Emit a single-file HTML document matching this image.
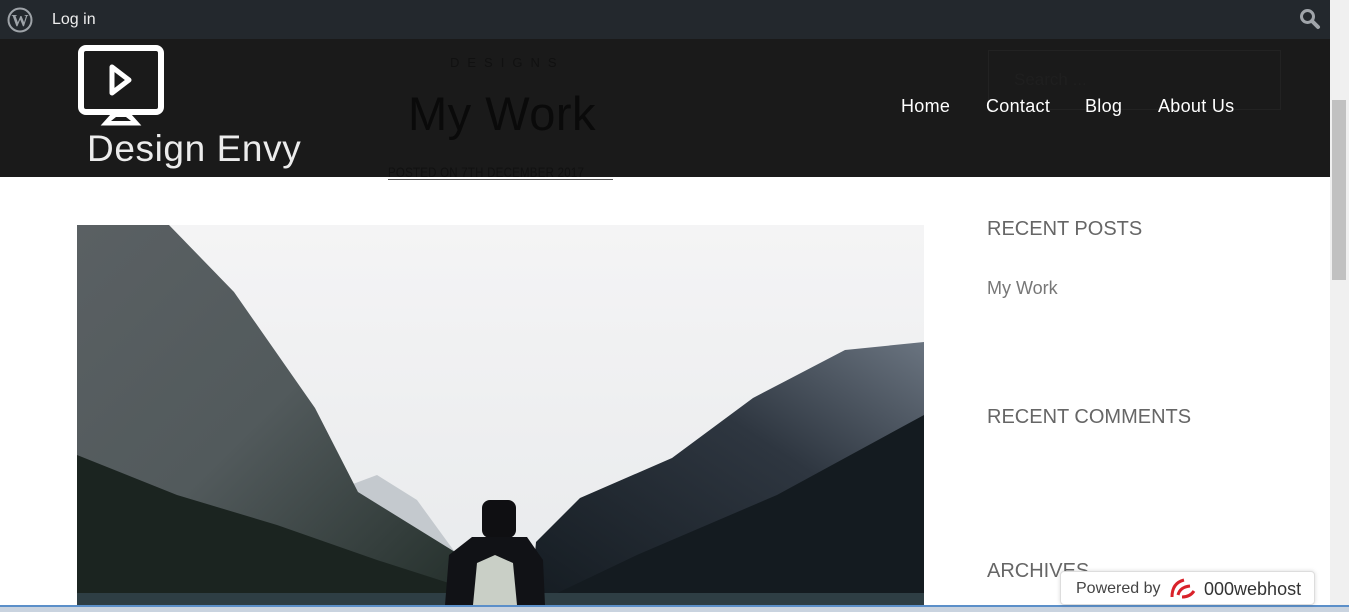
<!DOCTYPE html>
<html><head><meta charset="utf-8"><style>
*{margin:0;padding:0;box-sizing:border-box}
body{width:1349px;height:612px;overflow:hidden;background:#fff;font-family:"Liberation Sans",sans-serif;position:relative}
.abs{position:absolute}
</style></head><body>
<!-- admin bar -->
<div class="abs" style="left:0;top:0;width:1330px;height:39px;background:#23282d"></div>
<svg class="abs" style="left:7px;top:7px" width="26" height="26" viewBox="0 0 26 26"><circle cx="13" cy="13" r="11.5" fill="none" stroke="#9ea3a8" stroke-width="2"/><text x="13" y="19" text-anchor="middle" font-family="Liberation Serif" font-size="17" font-weight="bold" fill="#9ea3a8">W</text></svg>
<div class="abs" style="left:52px;top:11px;color:#eee;font-size:16px">Log in</div>
<svg class="abs" style="left:1299px;top:8px" width="22" height="22" viewBox="0 0 22 22"><circle cx="8.5" cy="8.5" r="6" fill="none" stroke="#a0a5aa" stroke-width="3"/><line x1="13" y1="13" x2="19" y2="19" stroke="#a0a5aa" stroke-width="4" stroke-linecap="round"/></svg>
<!-- header -->
<div class="abs" style="left:0;top:39px;width:1330px;height:138px;background:#1a1a1a"></div>
<div class="abs" style="left:450px;top:55px;color:#111;font-size:13px;letter-spacing:8px">DESIGNS</div>
<div class="abs" style="left:408px;top:86px;color:#0a0a0a;font-size:47px;letter-spacing:0.5px">My Work</div>
<div class="abs" style="left:988px;top:50px;width:293px;height:60px;border:1px solid #222"></div>
<div class="abs" style="left:1014px;top:70px;color:#1f1f1f;font-size:17px">Search ...</div>
<svg class="abs" style="left:76px;top:43px" width="90" height="86" viewBox="0 0 90 86"><rect x="5" y="5" width="80" height="64" rx="5" fill="none" stroke="#fff" stroke-width="6"/><path d="M36 24 L36 50 L53 37 Z" fill="none" stroke="#fff" stroke-width="5" stroke-linejoin="round"/><path d="M37 71 L28 81 L62 81 L53 71" fill="#fff" stroke="#fff" stroke-width="3"/><path d="M40 74 L35 78 L55 78 L50 74Z" fill="#1a1a1a"/></svg>
<div class="abs" style="left:87px;top:129px;color:#ececec;font-size:37px;line-height:40px;letter-spacing:0.6px">Design Envy</div>
<div class="abs" style="left:901px;top:96px;color:#fff;font-size:18px;letter-spacing:0.3px">Home</div>
<div class="abs" style="left:986px;top:96px;color:#fff;font-size:18px;letter-spacing:0.3px">Contact</div>
<div class="abs" style="left:1085px;top:96px;color:#fff;font-size:18px;letter-spacing:0.3px">Blog</div>
<div class="abs" style="left:1158px;top:96px;color:#fff;font-size:18px;letter-spacing:0.3px">About Us</div>
<div class="abs" style="left:388px;top:164px;width:225px;white-space:nowrap;color:#111;font-size:14px;transform-origin:0 0;transform:scaleX(0.82);letter-spacing:0.3px">POSTED ON 7TH DECEMBER 2017</div>
<div class="abs" style="left:388px;top:179px;width:225px;height:1px;background:#555"></div>
<!-- sidebar -->
<div class="abs" style="left:987px;top:218px;color:#666;font-size:20px">RECENT POSTS</div>
<div class="abs" style="left:987px;top:278px;color:#777;font-size:18px">My Work</div>
<div class="abs" style="left:987px;top:406px;color:#666;font-size:20px">RECENT COMMENTS</div>
<div class="abs" style="left:987px;top:560px;color:#666;font-size:20px">ARCHIVES</div>
<!-- image -->
<svg class="abs" style="left:77px;top:225px" width="847" height="380" viewBox="0 0 847 380">
<defs><linearGradient id="sky" x1="0" y1="0" x2="0" y2="1"><stop offset="0" stop-color="#f4f4f5"/><stop offset="1" stop-color="#e8eaec"/></linearGradient>
<linearGradient id="lm" x1="0" y1="0" x2="1" y2="1"><stop offset="0" stop-color="#5a6063"/><stop offset=".5" stop-color="#525a5c"/><stop offset="1" stop-color="#25302c"/></linearGradient>
<linearGradient id="rm" x1="1" y1="0" x2="0" y2="1"><stop offset="0" stop-color="#6a7480"/><stop offset=".4" stop-color="#2e3640"/><stop offset="1" stop-color="#151c22"/></linearGradient></defs>
<rect width="847" height="380" fill="url(#sky)"/>
<path d="M260 265 L300 250 L340 275 L380 330 L330 360 L260 340Z" fill="#c4c9ce"/>
<path d="M0 0 L92 0 L157 67 L238 183 L281 267 L378 327 L378 373 L0 373Z" fill="url(#lm)"/>
<path d="M0 230 L100 270 L200 300 L300 335 L378 360 L378 373 L0 373Z" fill="#1b2420"/>
<path d="M847 117 L768 125 L676 173 L595 233 L503 273 L459 317 L454 373 L847 373Z" fill="url(#rm)"/>
<path d="M847 190 L700 270 L560 330 L470 373 L847 373Z" fill="#141b20"/>
<rect y="368" width="847" height="12" fill="#2e3e44"/>
<rect x="405" y="275" width="34" height="38" rx="8" fill="#0f0f12"/>
<path d="M368 380 L372 330 L395 312 L450 312 L466 335 L468 380Z" fill="#111216"/>
<path d="M396 380 L400 338 L418 330 L436 338 L440 380Z" fill="#c9cfc6"/>
</svg>
<!-- scrollbar -->
<div class="abs" style="left:1330px;top:0;width:19px;height:605px;background:#f0f0f0"></div>
<div class="abs" style="left:1332px;top:100px;width:14px;height:180px;background:#c1c1c1"></div>
<!-- status bar -->
<div class="abs" style="left:0;top:605px;width:1349px;height:7px;background:#c9d3df;border-top:2px solid #5b8fc9"></div>
<!-- powered by -->
<div class="abs" style="left:1060px;top:571px;width:255px;height:34px;background:#fff;border:1px solid #ddd;border-radius:4px;box-shadow:0 0 4px rgba(0,0,0,.15)"></div>
<div class="abs" style="left:1076px;top:580px;color:#444;font-size:16px">Powered by</div>
<svg class="abs" style="left:1168px;top:575px" width="30" height="26" viewBox="0 0 30 26"><path d="M4 22 Q4 8 16 5" stroke="#d9222a" stroke-width="3" fill="none"/><path d="M10 20 Q12 12 22 11" stroke="#d9222a" stroke-width="3" fill="none"/><path d="M14 22 Q22 22 26 16" stroke="#d9222a" stroke-width="3" fill="none"/></svg>
<div class="abs" style="left:1204px;top:579px;color:#333;font-size:18px">000webhost</div>
</body></html>
